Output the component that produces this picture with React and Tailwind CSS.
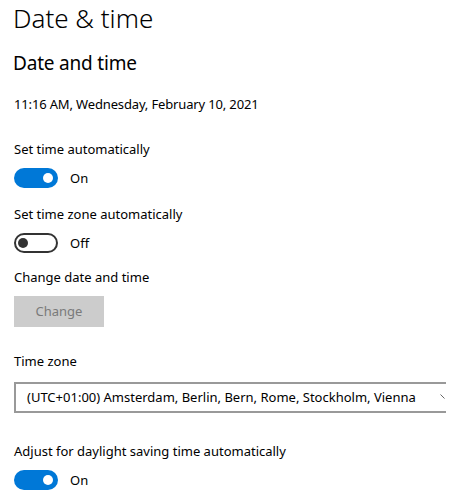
import React from "react";

function Toggle({ on }) {
  if (on) {
    return (
      <div className="w-[44px] h-[20px] rounded-full bg-[#0078d7] flex items-center justify-end pr-[5px]">
        <div className="w-[10px] h-[10px] rounded-full bg-white" />
      </div>
    );
  }
  return (
    <div className="w-[44px] h-[20px] rounded-full border-2 border-[#333333] bg-white flex items-center pl-[2px]">
      <div className="w-[10px] h-[10px] rounded-full bg-[#333333]" />
    </div>
  );
}

function ToggleRow({ label, on }) {
  return (
    <div className="flex flex-col">
      <div className="text-[13px] leading-[19px] text-black">{label}</div>
      <div className="flex items-center gap-[12px] mt-[9px]">
        <Toggle on={on} />
        <span className="text-[13px] leading-[19px] text-black">{on ? "On" : "Off"}</span>
      </div>
    </div>
  );
}

export default function App() {
  return (
    <div
      className="w-[455px] h-[493px] bg-white overflow-hidden text-black"
      style={{ fontFamily: '"Noto Sans", "Open Sans", sans-serif' }}
    >
      <div className="w-[446px] overflow-hidden pl-[14px] pt-[2px]">
        <h1 className="text-[26px] font-light leading-[32px] -ml-[1px]">Date &amp; time</h1>
        <h2 className="text-[19px] leading-[26px] mt-[16px] -ml-[1px] tracking-[-0.2px]">Date and time</h2>
        <div className="text-[13px] leading-[19px] mt-[19px] tracking-[-0.15px]">11:16 AM, Wednesday, February 10, 2021</div>

        <div className="mt-[26px]">
          <ToggleRow label="Set time automatically" on={true} />
        </div>
        <div className="mt-[17px]">
          <ToggleRow label="Set time zone automatically" on={false} />
        </div>

        <div className="mt-[15px] text-[13px] leading-[19px]">Change date and time</div>
        <div className="mt-[9px] w-[90px] h-[31px] bg-[#cccccc] text-[#7a7a7a] text-[13px] flex items-center justify-center">
          Change
        </div>

        <div className="mt-[25px] text-[13px] leading-[19px]">Time zone</div>
        <div className="mt-[11px] h-[31px] w-[460px] border-2 border-[#999999] flex items-center pl-[11px] relative">
          <span className="text-[13px] whitespace-nowrap">(UTC+01:00) Amsterdam, Berlin, Bern, Rome, Stockholm, Vienna</span>
          <svg className="absolute left-[424px] top-[10px]" width="8" height="8" viewBox="0 0 8 8">
            <path d="M0.5 0.5 L4.5 4.5" stroke="#666" strokeWidth="1" fill="none" />
          </svg>
        </div>

        <div className="mt-[29px]">
          <ToggleRow label="Adjust for daylight saving time automatically" on={true} />
        </div>
      </div>
    </div>
  );
}
